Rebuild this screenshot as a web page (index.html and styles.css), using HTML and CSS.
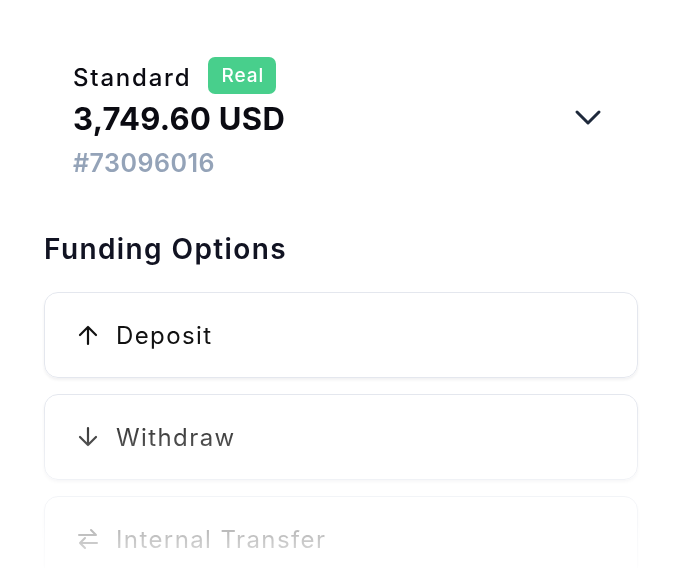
FILE: index.html
```html
<!DOCTYPE html>
<html lang="en">
<head>
<meta charset="utf-8">
<title>Account</title>
<link rel="stylesheet" href="styles.css">
</head>
<body>
<main class="page">
  <section class="account">
    <div class="account-info">
      <div class="title-row">
        <span class="account-type">Standard</span>
        <span class="badge">Real</span>
      </div>
      <div class="balance">3,749.60 USD</div>
      <div class="account-id">#73096016</div>
    </div>
    <button class="chevron" aria-label="Toggle">
      <svg width="28" height="18" viewBox="0 0 28 18"><path d="M3 3 L14 14 L25 3" fill="none" stroke="#1e293b" stroke-width="3" stroke-linecap="round" stroke-linejoin="round"/></svg>
    </button>
  </section>

  <h2 class="section-title">Funding Options</h2>

  <ul class="options">
    <li class="option">
      <svg class="icon" width="22" height="22" viewBox="0 0 22 22"><path d="M11 20 V3 M3 11 L11 3 L19 11" fill="none" stroke="currentColor" stroke-width="2.2" stroke-linecap="round" stroke-linejoin="round"/></svg>
      <span>Deposit</span>
    </li>
    <li class="option">
      <svg class="icon" width="22" height="22" viewBox="0 0 22 22"><path d="M11 2 V19 M3 11 L11 19 L19 11" fill="none" stroke="currentColor" stroke-width="2.2" stroke-linecap="round" stroke-linejoin="round"/></svg>
      <span>Withdraw</span>
    </li>
    <li class="option">
      <svg class="icon" width="22" height="22" viewBox="0 0 22 22"><path d="M2 7 H19 M14 2 L19 7 M20 15 H3 M8 10 L3 15 L8 20" fill="none" stroke="currentColor" stroke-width="2" stroke-linecap="round" stroke-linejoin="round"/></svg>
      <span>Internal Transfer</span>
    </li>
  </ul>
</main>
</body>
</html>
```

FILE: styles.css
```css
* { box-sizing: border-box; }

html, body {
  margin: 0;
  padding: 0;
  background: #ffffff;
}

body {
  font-family: "Inter", "Noto Sans", sans-serif;
  color: #0b0b12;
  overflow: hidden;
}

.page {
  padding: 57px 45px 0 44px;
  -webkit-mask-image: linear-gradient(to bottom, #000 395px, transparent 585px);
  mask-image: linear-gradient(to bottom, #000 395px, transparent 585px);
}

.account {
  display: flex;
  align-items: center;
  justify-content: space-between;
  padding: 0 36px 0 29px;
}

.account-info {
  display: flex;
  flex-direction: column;
}

.title-row {
  display: flex;
  align-items: center;
  gap: 17px;
  height: 37px;
}

.account-type {
  font-size: 24px;
  font-weight: 500;
  letter-spacing: 1.8px;
  color: #0b0b12;
  margin-top: 3px;
}

.badge {
  background: #48cf8c;
  color: #ffffff;
  font-size: 19px;
  font-weight: 500;
  letter-spacing: 1px;
  border-radius: 7px;
  padding: 0 12px 0 13px;
  height: 37px;
  display: inline-flex;
  align-items: center;
}

.balance {
  font-size: 31px;
  font-weight: 700;
  color: #0b0b12;
  line-height: 40px;
  margin-top: 5px;
  letter-spacing: 0.3px;
}

.account-id {
  font-size: 25px;
  font-weight: 600;
  color: #94a3b8;
  line-height: 34px;
  margin-top: 7px;
  letter-spacing: 0.5px;
}

.chevron {
  background: none;
  border: none;
  padding: 0;
  display: flex;
  margin-top: -2px;
}

.section-title {
  margin: 52px 0 0;
  font-size: 28px;
  font-weight: 600;
  line-height: 34px;
  letter-spacing: 1.4px;
  color: #111322;
}

.options {
  list-style: none;
  margin: 26px 0 0;
  padding: 0;
  display: flex;
  flex-direction: column;
  gap: 16px;
}

.option {
  height: 86px;
  border: 1px solid #e4e7ee;
  border-radius: 14px;
  box-shadow: 0 2px 3px rgba(15, 23, 42, 0.06);
  display: flex;
  align-items: center;
  gap: 17px;
  padding-left: 32px;
  font-size: 24px;
  font-weight: 400;
  letter-spacing: 1.4px;
  color: #111;
}

.icon {
  flex: none;
}
```
